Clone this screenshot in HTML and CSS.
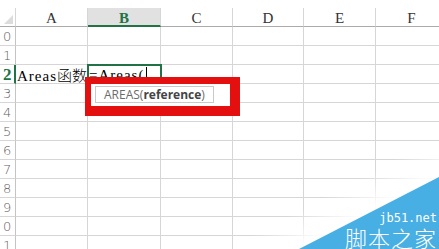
FILE: index.html
```html
<!DOCTYPE html>
<html lang="zh-CN">
<head>
    <meta charset="UTF-8">
    <title>Areas函数</title>
    <link rel="stylesheet" href="styles.css">
</head>
<body>
<div class="page">

    <div class="sheet">
        <div class="corner"></div>
        <div class="col">A</div>
        <div class="col sel">B</div>
        <div class="col">C</div>
        <div class="col">D</div>
        <div class="col">E</div>
        <div class="col">F</div>

        <div class="row">0</div>
        <div></div><div></div><div></div><div></div><div></div><div></div>

        <div class="row">1</div>
        <div></div><div></div><div></div><div></div><div></div><div></div>

        <div class="row sel">2</div>
        <div class="cell">Areas<span class="cjk">函数</span></div>
        <div class="cell active">=Areas(<span class="caret"></span></div>
        <div></div><div></div><div></div><div></div>

        <div class="row">3</div>
        <div></div><div></div><div></div><div></div><div></div><div></div>

        <div class="row">4</div>
        <div></div><div></div><div></div><div></div><div></div><div></div>

        <div class="row">5</div>
        <div></div><div></div><div></div><div></div><div></div><div></div>

        <div class="row">6</div>
        <div></div><div></div><div></div><div></div><div></div><div></div>

        <div class="row">7</div>
        <div></div><div></div><div></div><div></div><div></div><div></div>

        <div class="row">8</div>
        <div></div><div></div><div></div><div></div><div></div><div></div>

        <div class="row">9</div>
        <div></div><div></div><div></div><div></div><div></div><div></div>

        <div class="row">0</div>
        <div></div><div></div><div></div><div></div><div></div><div></div>

        <div class="row">1</div>
        <div></div><div></div><div></div><div></div><div></div><div></div>
    </div>

    <!-- red mark around the function hint -->
    <div class="callout"></div>
    <div class="tip">AREAS(<b>reference</b>)</div>

    <!-- site watermark -->
    <div class="wm_fade"></div>
    <div class="wm"></div>
    <div class="wm_text">
        <div class="wm_url">jb51.net</div>
        <div class="wm_name">脚本之家</div>
    </div>

</div>
</body>
</html>
```

FILE: styles.css
```css
body{
    margin: 0;
    background-color: white;
    font-family: "Liberation Sans", sans-serif;
}

.page{
    position: relative;
    width: 439px;
    height: 249px;
    overflow: hidden;
    padding-top: 8px;
    box-sizing: border-box;
}

.sheet{
    display: grid;
    grid-template-columns: 16px 72px 73px 72px 71px 72px 72px;
    grid-auto-rows: 19px;
}

.sheet > div{
    box-sizing: border-box;
    border-right: 1px solid #d6d6d6;
    border-bottom: 1px solid #d6d6d6;
}

.corner{
    position: relative;
    border-bottom-color: #ababab !important;
}

.corner::after{
    content: "";
    position: absolute;
    right: 2px;
    bottom: 2px;
    border-left: 9px solid transparent;
    border-bottom: 9px solid #dcdcdc;
}

.col{
    font-family: "Liberation Serif", serif;
    font-size: 15px;
    line-height: 20px;
    text-align: center;
    color: #333;
    border-bottom-color: #ababab !important;
}

.col.sel{
    background-color: #e1e1e1;
    color: #217346;
    font-weight: bold;
    border-bottom: 2px solid #217346 !important;
}

.row{
    font-family: "DejaVu Sans", sans-serif;
    font-size: 13px;
    font-weight: 300;
    line-height: 19px;
    color: #606060;
    padding-left: 3px;
    border-right-color: #c4c4c4 !important;
}

.row.sel{
    color: #217346;
    font-family: "Liberation Serif", serif;
    font-size: 17px;
    font-weight: bold;
    border-right: 2px solid #217346 !important;
}

.cell{
    font-family: "Liberation Serif", serif;
    font-size: 15px;
    letter-spacing: 1px;
    line-height: 20px;
    white-space: nowrap;
    color: #000;
    padding-left: 1px;
}

.cjk{
    font-family: "Noto Sans CJK SC", sans-serif;
    font-size: 15px;
    font-weight: 300;
    letter-spacing: 0;
}

.active{
    position: relative;
    outline: 2px solid #217346;
    outline-offset: -1px;
}

.caret{
    display: inline-block;
    width: 0;
    height: 15px;
    border-left: 1px solid #000;
    vertical-align: -2px;
    margin-left: 2px;
}

.callout{
    position: absolute;
    left: 85px;
    top: 77px;
    width: 155px;
    height: 39px;
    box-sizing: border-box;
    border-style: solid;
    border-color: #e3100f;
    border-width: 7px 10px 10px 6px;
    background-color: white;
}

.tip{
    position: absolute;
    left: 95px;
    top: 86px;
    width: 119px;
    height: 17px;
    box-sizing: border-box;
    border: 1px solid #c9c9c9;
    background-color: white;
    font-family: "Open Sans", sans-serif;
    font-size: 12px;
    line-height: 15px;
    color: #6b6b6b;
    padding-left: 8px;
    white-space: nowrap;
}

.tip b{
    color: #444;
}

.wm_fade{
    position: absolute;
    right: 0;
    bottom: 0;
    width: 200px;
    height: 100px;
    background: linear-gradient(152deg, rgba(255, 255, 255, 0) 45%, rgba(255, 255, 255, 0.9) 62%);
}

.wm{
    position: absolute;
    right: 0;
    bottom: 0;
    width: 140px;
    height: 72px;
    background-color: #47afe4;
    clip-path: polygon(0 100%, 100% 0, 100% 100%);
}

.wm_text{
    position: absolute;
    right: 2px;
    bottom: 1px;
    text-align: right;
    color: white;
}

.wm_url{
    font-family: "DejaVu Sans Mono", monospace;
    font-size: 12px;
    line-height: 13px;
    margin-bottom: 1px;
}

.wm_name{
    font-family: "Noto Sans CJK SC", sans-serif;
    font-size: 22px;
    font-weight: 300;
    line-height: 22px;
    letter-spacing: 1px;
}
```
